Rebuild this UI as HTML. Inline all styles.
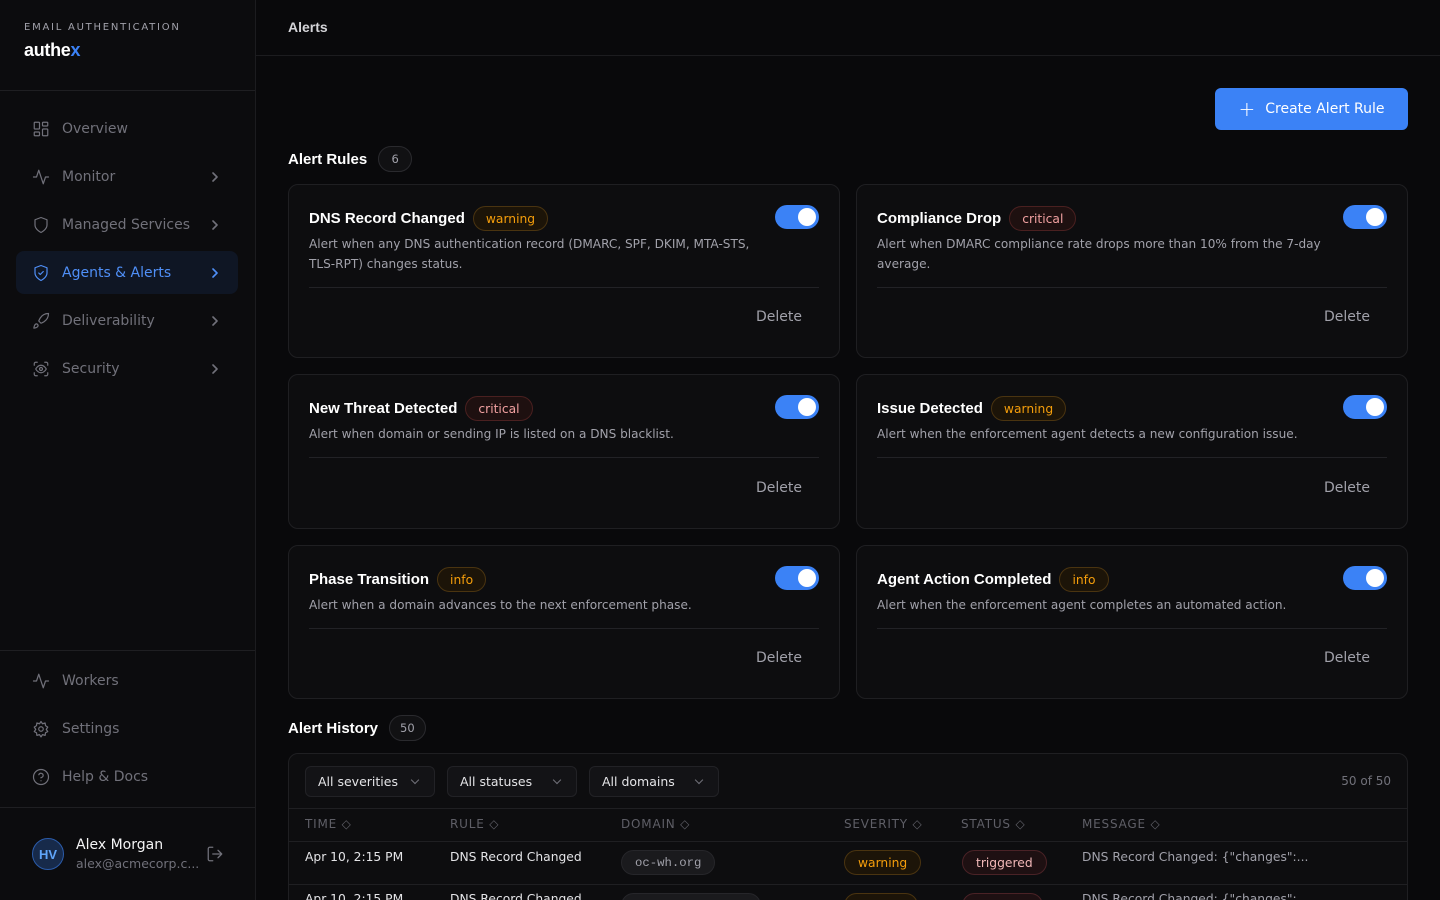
<!DOCTYPE html>
<html style="width:1440px;height:900px;overflow:hidden"><head><meta charset="utf-8"><style>
*{box-sizing:border-box;margin:0;padding:0}
body{width:1440px;height:900px;overflow:hidden;background:#09090b;font-family:"DejaVu Sans","Liberation Sans",sans-serif;color:#e4e4e7;position:relative}
.sb{position:absolute;left:0;top:0;width:256px;height:900px;background:#0c0c0e;border-right:1px solid #1c1c1f}
.brand{height:91px;border-bottom:1px solid #1f1f22;padding:22px 24px}
.brand .k{font-size:10px;letter-spacing:1.75px;color:#a1a1aa}
.brand .l{font-family:"Liberation Sans",sans-serif;font-weight:bold;font-size:18px;color:#fff;margin-top:7px;letter-spacing:-0.3px}
.brand .l span{color:#3b82f6}
.nav{position:absolute;left:16px;width:222px;height:43px;display:flex;align-items:center;padding-left:16px;font-size:14px;color:#71717a;border-radius:8px}
.nav svg{width:18px;height:18px;margin-right:12px;fill:none;stroke:currentColor;stroke-width:1.6;stroke-linecap:round;stroke-linejoin:round}
.nav .ch{position:absolute;right:18px;width:10px;height:10px;margin:0}
.nav.act{background:#0f1624;color:#4f8ff7}
.sep{position:absolute;left:0;width:255px;border-top:1px solid #1f1f22}
.top{position:absolute;left:256px;top:0;right:0;height:56px;border-bottom:1px solid #1c1c1f;padding:19px 32px;font-size:14px;font-weight:bold;color:#d4d4d8;font-family:"Liberation Sans",sans-serif}
.btn{position:absolute;left:1215px;top:88px;width:193px;height:42px;background:#3b82f6;border-radius:6px;color:#fff;font-size:14px;display:flex;align-items:center;justify-content:center}
.sec{position:absolute;left:288px;font-family:"Liberation Sans",sans-serif;font-weight:bold;font-size:15px;color:#fff;display:flex;align-items:center}
.cnt{margin-left:11px;height:26px;min-width:34px;padding:0 10px;border:1px solid #2a2a2e;border-radius:13px;font-family:"DejaVu Sans",sans-serif;font-weight:normal;font-size:11.5px;color:#a1a1aa;display:flex;align-items:center;justify-content:center;background:#111113}
.card{position:absolute;width:552px;background:#0d0d0f;border:1px solid #1f1f22;border-radius:10px}
.card .h{position:absolute;left:20px;top:21px;display:flex;align-items:center;font-family:"Liberation Sans",sans-serif;font-weight:bold;font-size:15px;color:#fff}
.bd{margin-left:8px;height:25px;padding:0 12px;border-radius:13px;font-family:"DejaVu Sans",sans-serif;font-weight:normal;font-size:12.3px;display:flex;align-items:center}
.w{color:#f59e0b;background:#1c1408;border:1px solid #4a3410}
.c{color:#f0a0a0;background:#1e1010;border:1px solid #4a2020}
.i{color:#f59e0b;background:#1c1408;border:1px solid #4a3410}
.tg{position:absolute;right:20px;top:20px;width:44px;height:24px;border-radius:12px;background:#3b82f6}
.tg:after{content:"";position:absolute;right:3px;top:3px;width:18px;height:18px;border-radius:50%;background:#fff}
.card .d{position:absolute;left:20px;top:49px;width:460px;font-size:12.1px;line-height:20px;color:#a1a1aa}
.card .hr{position:absolute;left:20px;right:20px;border-top:1px solid #222226}
.card .del{position:absolute;right:37px;font-size:14px;color:#a1a1aa}
.tbl{position:absolute;left:288px;top:753px;width:1120px;height:160px;background:#0d0d0f;border:1px solid #1f1f22;border-radius:10px;overflow:hidden}
.sel{position:absolute;top:12px;height:31px;border:1px solid #222226;background:#131316;border-radius:6px;font-size:12.5px;color:#e4e4e7;display:flex;align-items:center;padding-left:12px}
.sel:after{content:"";position:absolute;right:16px;top:10px;width:5px;height:5px;border-right:1.3px solid #71717a;border-bottom:1.3px solid #71717a;transform:rotate(45deg)}
.th{position:absolute;top:63px;font-size:12px;letter-spacing:.8px;color:#5f5f67}
.td{position:absolute;font-size:12.3px;color:#e4e4e7}
.pill{position:absolute;height:25px;border-radius:13px;display:flex;align-items:center;padding:0 13px;font-size:12.3px}
</style></head><body>
<div class="sb">
<div class="brand"><div class="k">EMAIL AUTHENTICATION</div><div class="l">authe<span>x</span></div></div>
<div class="nav" style="top:107px"><svg viewBox="0 0 24 24"><rect x="3" y="3" width="7" height="9" rx="1"/><rect x="14" y="3" width="7" height="5" rx="1"/><rect x="14" y="12" width="7" height="9" rx="1"/><rect x="3" y="16" width="7" height="5" rx="1"/></svg>Overview</div>
<div class="nav" style="top:155px"><svg viewBox="0 0 24 24"><path d="M22 12h-4l-3 9L9 3l-3 9H2"/></svg>Monitor<svg class="ch" viewBox="0 0 10 10"><path d="M3 1l4 4-4 4"/></svg></div>
<div class="nav" style="top:203px"><svg viewBox="0 0 24 24"><path d="M12 22s8-4 8-10V5l-8-3-8 3v7c0 6 8 10 8 10z"/></svg>Managed Services<svg class="ch" viewBox="0 0 10 10"><path d="M3 1l4 4-4 4"/></svg></div>
<div class="nav act" style="top:251px"><svg viewBox="0 0 24 24"><path d="M12 22s8-4 8-10V5l-8-3-8 3v7c0 6 8 10 8 10z"/><path d="M9 12l2 2 4-4"/></svg>Agents &amp; Alerts<svg class="ch" viewBox="0 0 10 10"><path d="M3 1l4 4-4 4"/></svg></div>
<div class="nav" style="top:299px"><svg viewBox="0 0 24 24"><path d="M4.5 16.5c-1.5 1.3-2 5-2 5s3.7-.5 5-2c.7-.8.7-2.1-.1-2.9a2.2 2.2 0 0 0-2.9-.1z"/><path d="M12 15l-3-3a22 22 0 0 1 2-4A13 13 0 0 1 22 2c0 2.7-.8 7.5-6 11a22 22 0 0 1-4 2z"/></svg>Deliverability<svg class="ch" viewBox="0 0 10 10"><path d="M3 1l4 4-4 4"/></svg></div>
<div class="nav" style="top:347px"><svg viewBox="0 0 24 24"><path d="M3 7V5a2 2 0 0 1 2-2h2M17 3h2a2 2 0 0 1 2 2v2M21 17v2a2 2 0 0 1-2 2h-2M7 21H5a2 2 0 0 1-2-2v-2"/><circle cx="12" cy="12" r="2"/><path d="M5 12s2.5-5 7-5 7 5 7 5-2.5 5-7 5-7-5-7-5z"/></svg>Security<svg class="ch" viewBox="0 0 10 10"><path d="M3 1l4 4-4 4"/></svg></div>
<div class="sep" style="top:650px"></div>
<div class="nav" style="top:659px"><svg viewBox="0 0 24 24"><path d="M22 12h-4l-3 9L9 3l-3 9H2"/></svg>Workers</div>
<div class="nav" style="top:707px"><svg viewBox="0 0 24 24"><circle cx="12" cy="12" r="3"/><path d="M12 2l2 3 3.5-1 .5 3.5 3 2-2 3 2 3-3 1.5-.5 3.5-3.5-1-2 3-2-3-3.5 1-.5-3.5-3-1.5 2-3-2-3 3-2L6.5 4 10 5z"/></svg>Settings</div>
<div class="nav" style="top:755px"><svg viewBox="0 0 24 24"><circle cx="12" cy="12" r="10"/><path d="M9.1 9a3 3 0 0 1 5.8 1c0 2-3 3-3 3M12 17h.01"/></svg>Help &amp; Docs</div>
<div class="sep" style="top:807px"></div>
<div style="position:absolute;left:32px;top:838px;width:32px;height:32px;border-radius:50%;background:#172a4a;border:1px solid #2b5cab;color:#60a5fa;font-family:'Liberation Sans',sans-serif;font-weight:bold;font-size:13px;display:flex;align-items:center;justify-content:center">HV</div>
<div style="position:absolute;left:76px;top:837px;font-size:14px;color:#f4f4f5">Alex Morgan</div>
<div style="position:absolute;left:76px;top:856px;font-size:12.5px;color:#71717a">alex@acmecorp.c...</div>
<svg style="position:absolute;left:206px;top:845px" width="18" height="18" viewBox="0 0 24 24" fill="none" stroke="#71717a" stroke-width="1.7" stroke-linecap="round" stroke-linejoin="round"><path d="M9 21H5a2 2 0 0 1-2-2V5a2 2 0 0 1 2-2h4M16 17l5-5-5-5M21 12H9"/></svg>
</div>
<div class="top">Alerts</div>
<div class="btn"><span style="font-size:20px;margin-right:10px;font-weight:300">+</span>Create Alert Rule</div>
<div class="sec" style="top:146px">Alert Rules<span class="cnt">6</span></div>

<div class="card" style="left:288px;top:184px;height:174px"><div class="h">DNS Record Changed<span class="bd w">warning</span></div><div class="tg"></div><div class="d">Alert when any DNS authentication record (DMARC, SPF, DKIM, MTA-STS, TLS-RPT) changes status.</div><div class="hr" style="top:102px"></div><div class="del" style="top:124px">Delete</div></div>
<div class="card" style="left:856px;top:184px;height:174px"><div class="h">Compliance Drop<span class="bd c">critical</span></div><div class="tg"></div><div class="d">Alert when DMARC compliance rate drops more than 10% from the 7-day average.</div><div class="hr" style="top:102px"></div><div class="del" style="top:124px">Delete</div></div>

<div class="card" style="left:288px;top:374px;height:155px"><div class="h">New Threat Detected<span class="bd c">critical</span></div><div class="tg"></div><div class="d" style="width:500px">Alert when domain or sending IP is listed on a DNS blacklist.</div><div class="hr" style="top:82px"></div><div class="del" style="top:105px">Delete</div></div>
<div class="card" style="left:856px;top:374px;height:155px"><div class="h">Issue Detected<span class="bd w">warning</span></div><div class="tg"></div><div class="d" style="width:500px">Alert when the enforcement agent detects a new configuration issue.</div><div class="hr" style="top:82px"></div><div class="del" style="top:105px">Delete</div></div>

<div class="card" style="left:288px;top:545px;height:154px"><div class="h">Phase Transition<span class="bd i">info</span></div><div class="tg"></div><div class="d" style="width:500px">Alert when a domain advances to the next enforcement phase.</div><div class="hr" style="top:82px"></div><div class="del" style="top:104px">Delete</div></div>
<div class="card" style="left:856px;top:545px;height:154px"><div class="h">Agent Action Completed<span class="bd i">info</span></div><div class="tg"></div><div class="d" style="width:500px">Alert when the enforcement agent completes an automated action.</div><div class="hr" style="top:82px"></div><div class="del" style="top:104px">Delete</div></div>

<div class="sec" style="top:715px">Alert History<span class="cnt">50</span></div>
<div class="tbl">
<div class="sel" style="left:16px;width:130px">All severities</div>
<div class="sel" style="left:158px;width:130px">All statuses</div>
<div class="sel" style="left:300px;width:130px">All domains</div>
<div style="position:absolute;right:16px;top:20px;font-size:12px;color:#71717a">50 of 50</div>
<div style="position:absolute;left:0;right:0;top:54px;border-top:1px solid #1f1f22"></div>
<div class="th" style="left:16px">TIME ◇</div><div class="th" style="left:161px">RULE ◇</div><div class="th" style="left:332px">DOMAIN ◇</div><div class="th" style="left:555px">SEVERITY ◇</div><div class="th" style="left:672px">STATUS ◇</div><div class="th" style="left:793px">MESSAGE ◇</div>
<div style="position:absolute;left:0;right:0;top:87px;border-top:1px solid #1f1f22"></div>
<div class="td" style="left:16px;top:96px">Apr 10, 2:15 PM</div><div class="td" style="left:161px;top:96px">DNS Record Changed</div>
<div class="pill" style="left:332px;top:96px;background:#1a1a1d;border:1px solid #26262a;font-family:'Liberation Mono',monospace;color:#a1a1aa">oc-wh.org</div>
<div class="pill w" style="left:555px;top:96px">warning</div>
<div class="pill" style="left:673px;top:96px;background:#1e1012;border:1px solid #4a2226;color:#f2b8b8">triggered</div>
<div class="td" style="left:793px;top:96px;color:#a1a1aa">DNS Record Changed: {"changes":...</div>
<div style="position:absolute;left:0;right:0;top:130px;border-top:1px solid #1f1f22"></div>
<div class="td" style="left:16px;top:138px">Apr 10, 2:15 PM</div><div class="td" style="left:161px;top:138px">DNS Record Changed</div>
<div class="pill" style="left:332px;top:139px;width:140px;background:#1a1a1d;border:1px solid #26262a"></div>
<div class="pill w" style="left:555px;top:139px;width:74px"></div>
<div class="pill" style="left:673px;top:139px;width:81px;background:#1e1012;border:1px solid #4a2226"></div>
<div class="td" style="left:793px;top:138px;color:#a1a1aa">DNS Record Changed: {"changes":...</div>
</div>
</body></html>
